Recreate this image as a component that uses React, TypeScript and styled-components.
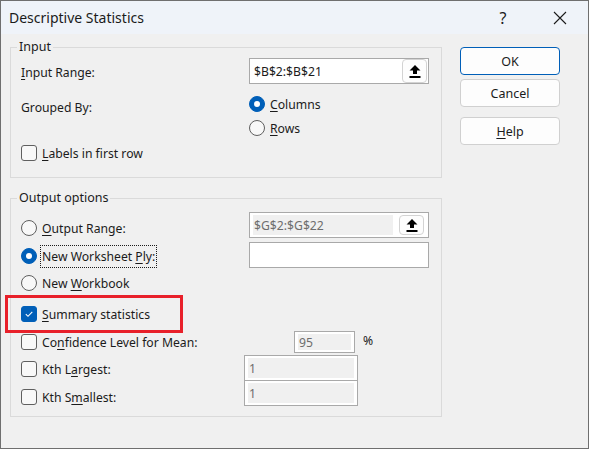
import styled, { createGlobalStyle } from "styled-components";

const GlobalStyle = createGlobalStyle`
  html, body { margin: 0; padding: 0; background: #f0f0f0; }
  body {
    font-family: "Noto Sans", "Open Sans", sans-serif;
    font-size: 12.2px;
    color: #1b1b1b;
  }
  * { box-sizing: border-box; }
`;

const Window = styled.div`
  width: 589px;
  height: 449px;
  border: 1px solid #6f6f6f;
  background: #f0f0f0;
  display: flex;
  flex-direction: column;
`;

const TitleBar = styled.div`
  height: 33px;
  flex: 0 0 33px;
  background: #eff3f9;
  display: flex;
  align-items: center;
  padding: 0 5px 0 8px;
`;

const Title = styled.span`
  flex: 1;
  font-size: 14px;
`;

const TitleBtn = styled.span<{ $gap?: number }>`
  width: 46px;
  height: 33px;
  display: flex;
  align-items: center;
  justify-content: center;
  margin-right: ${(p) => p.$gap ?? 0}px;
  font-size: 16px;
  color: #1b1b1b;
`;

const Body = styled.div`
  display: flex;
  gap: 18px;
  padding: 4px 0 0 9px;
`;

const Groups = styled.div`
  width: 432px;
  display: flex;
  flex-direction: column;
  gap: 11px;
`;

const Group = styled.fieldset<{ $pb: number }>`
  margin: 0;
  padding: 0 0 ${(p) => p.$pb}px 10px;
  border: 1px solid #dadada;
  min-width: 0;
`;

const Legend = styled.legend`
  padding: 0 2px;
  margin-left: -4px;
  line-height: 18px;
  font-size: 12.5px;
`;

const Row = styled.div<{ $h: number; $mt?: number; $label?: number }>`
  position: relative;
  display: grid;
  grid-template-columns: ${(p) => p.$label ?? 228}px auto auto;
  justify-content: start;
  align-items: center;
  height: ${(p) => p.$h}px;
  margin-top: ${(p) => p.$mt ?? 0}px;
`;

const Text = styled.span<{ $dy?: number }>`
  margin-top: ${(p) => (p.$dy ?? 0) * 2}px;
  white-space: nowrap;
`;

const Key = styled.u`
  text-underline-offset: 2px;
`;

const Option = styled.label<{ $dy?: number; $span?: boolean }>`
  display: flex;
  align-items: center;
  gap: 5px;
  margin-top: ${(p) => (p.$dy ?? 0) * 2}px;
  grid-column: ${(p) => (p.$span ? "1 / -1" : "auto")};
  white-space: nowrap;
`;

const RadioDot = styled.span<{ $on?: boolean }>`
  width: 16px;
  height: 16px;
  border-radius: 50%;
  flex: 0 0 16px;
  display: flex;
  align-items: center;
  justify-content: center;
  background: ${(p) => (p.$on ? "#005fb8" : "#f8f8f8")};
  border: 1px solid ${(p) => (p.$on ? "#005fb8" : "#5f5f5f")};
  &::after {
    content: "";
    display: ${(p) => (p.$on ? "block" : "none")};
    width: 6px;
    height: 6px;
    border-radius: 50%;
    background: #fff;
  }
`;

const Box = styled.span<{ $on?: boolean }>`
  width: 16px;
  height: 16px;
  flex: 0 0 16px;
  border-radius: 3px;
  display: flex;
  align-items: center;
  justify-content: center;
  background: ${(p) => (p.$on ? "#005fb8" : "#f8f8f8")};
  border: 1px solid ${(p) => (p.$on ? "#005fb8" : "#5f5f5f")};
`;

const Focus = styled.span`
  outline: 1px dotted #1b1b1b;
  outline-offset: 1px;
  padding: 1px 0;
`;

const Field = styled.div<{ $w: number; $h: number; $off?: boolean }>`
  width: ${(p) => p.$w}px;
  height: ${(p) => p.$h}px;
  border: 1px solid #a9a9a9;
  background: #fff;
  display: flex;
  align-items: stretch;
  padding: ${(p) => (p.$off ? "2px 3px 2px 3px" : "0 0 0 4px")};
`;

const Value = styled.span<{ $off?: boolean }>`
  flex: 1;
  display: flex;
  align-items: center;
  background: ${(p) => (p.$off ? "#f0f0f0" : "transparent")};
  color: ${(p) => (p.$off ? "#6d6d6d" : "#1b1b1b")};
  padding-left: ${(p) => (p.$off ? 1 : 0)}px;
`;

const PickBtn = styled.span`
  width: 25px;
  margin: 0 1px 0 6px;
  background: #fdfdfd;
  border: 1px solid #d3d3d3;
  border-radius: 4px;
  display: flex;
  align-items: center;
  justify-content: center;
`;

const Stacked = styled.div`
  margin-top: -1px;
`;

const Percent = styled.span`
  margin-left: 8px;
  margin-top: -4px;
`;

const Highlight = styled.span`
  position: absolute;
  left: -16px;
  top: -7px;
  width: 178px;
  height: 38px;
  border: 3px solid #e8202a;
  pointer-events: none;
`;

const Buttons = styled.div`
  width: 100px;
  margin-top: 9px;
  display: flex;
  flex-direction: column;
`;

const Button = styled.button<{ $primary?: boolean; $mt?: number }>`
  height: 28px;
  margin-top: ${(p) => p.$mt ?? 0}px;
  font: inherit;
  font-size: 12.5px;
  color: #1b1b1b;
  background: #fdfdfd;
  border: 1px solid ${(p) => (p.$primary ? "#005fb8" : "#d0d0d0")};
  border-radius: 4px;
  padding: 0;
`;

function PickIcon() {
  return (
    <svg width="12" height="15" viewBox="0 0 12 15">
      <polygon points="6,1 11.5,6.5 8,6.5 8,10 4,10 4,6.5 0.5,6.5" fill="#000" />
      <rect x="0.5" y="12" width="11" height="2" fill="#000" />
    </svg>
  );
}

function Check() {
  return (
    <svg width="10" height="10" viewBox="0 0 10 10">
      <path d="M1.8 5.2 L4 7.3 L8.3 2.8" fill="none" stroke="#fff" strokeWidth="1.1" />
    </svg>
  );
}

export default function App() {
  return (
    <>
      <GlobalStyle />
      <Window>
        <TitleBar>
          <Title>Descriptive Statistics</Title>
          <TitleBtn $gap={11}>?</TitleBtn>
          <TitleBtn>
            <svg width="14" height="14" viewBox="0 0 14 14">
              <path d="M1 1 L13 13 M13 1 L1 13" stroke="#1b1b1b" strokeWidth="1.1" />
            </svg>
          </TitleBtn>
        </TitleBar>

        <Body>
          <Groups>
            <Group $pb={12}>
              <Legend>Input</Legend>
              <Row $h={26} $mt={2}>
                <Text $dy={1}>
                  <Key>I</Key>nput Range:
                </Text>
                <Field $w={180} $h={26}>
                  <Value>$B$2:$B$21</Value>
                  <PickBtn>
                    <PickIcon />
                  </PickBtn>
                </Field>
              </Row>
              <Row $h={24} $mt={8}>
                <Text $dy={3}>Grouped By:</Text>
                <Option>
                  <RadioDot $on />
                  <span>
                    <Key>C</Key>olumns
                  </span>
                </Option>
              </Row>
              <Row $h={24}>
                <span />
                <Option>
                  <RadioDot />
                  <span>
                    <Key>R</Key>ows
                  </span>
                </Option>
              </Row>
              <Row $h={24} $mt={1}>
                <Option $span>
                  <Box />
                  <span>
                    <Key>L</Key>abels in first row
                  </span>
                </Option>
              </Row>
            </Group>

            <Group $pb={10}>
              <Legend>Output options</Legend>
              <Row $h={26} $mt={5}>
                <Option $dy={3}>
                  <RadioDot />
                  <span>
                    <Key>O</Key>utput Range:
                  </span>
                </Option>
                <Field $w={180} $h={26} $off>
                  <Value $off>$G$2:$G$22</Value>
                  <PickBtn>
                    <PickIcon />
                  </PickBtn>
                </Field>
              </Row>
              <Row $h={26} $mt={4}>
                <Option $dy={1}>
                  <RadioDot $on />
                  <Focus>
                    New Worksheet <Key>P</Key>ly:
                  </Focus>
                </Option>
                <Field $w={180} $h={26} />
              </Row>
              <Row $h={24} $mt={3}>
                <Option>
                  <RadioDot />
                  <span>
                    New <Key>W</Key>orkbook
                  </span>
                </Option>
              </Row>
              <Row $h={24} $mt={7}>
                <Option $span>
                  <Box $on>
                    <Check />
                  </Box>
                  <span>
                    <Key>S</Key>ummary statistics
                  </span>
                </Option>
                <Highlight />
              </Row>
              <Row $h={22} $mt={5} $label={273}>
                <Option>
                  <Box />
                  <span>
                    Co<Key>n</Key>fidence Level for Mean:
                  </span>
                </Option>
                <Field $w={61} $h={22} $off>
                  <Value $off>95</Value>
                </Field>
                <Percent>%</Percent>
              </Row>
              <Row $h={26} $mt={2} $label={223}>
                <Option $dy={1}>
                  <Box />
                  <span>
                    Kth L<Key>a</Key>rgest:
                  </span>
                </Option>
                <Field $w={114} $h={26} $off>
                  <Value $off>1</Value>
                </Field>
              </Row>
              <Stacked>
                <Row $h={26} $label={223}>
                  <Option $dy={4}>
                    <Box />
                    <span>
                      Kth S<Key>m</Key>allest:
                    </span>
                  </Option>
                  <Field $w={114} $h={26} $off>
                    <Value $off>1</Value>
                  </Field>
                </Row>
              </Stacked>
            </Group>
          </Groups>

          <Buttons>
            <Button $primary>OK</Button>
            <Button $mt={4}>Cancel</Button>
            <Button $mt={10}>
              <Key>H</Key>elp
            </Button>
          </Buttons>
        </Body>
      </Window>
    </>
  );
}
